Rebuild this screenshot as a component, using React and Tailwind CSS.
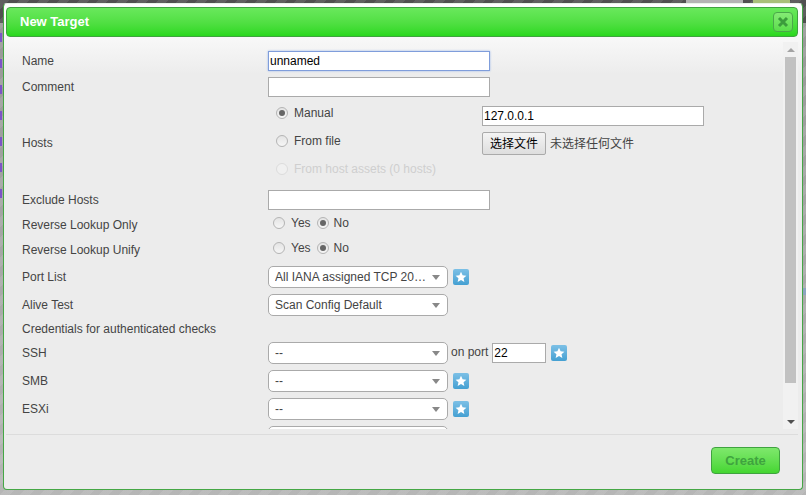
import React from "react";

function Star() {
  return (
    <span className="flex h-[16px] w-[16px] shrink-0 items-center justify-center rounded-[2px] bg-gradient-to-b from-[#7cc0e6] to-[#44a0d2]">
      <svg width="12" height="12" viewBox="0 0 24 24" fill="#fff">
        <path d="M12 1.5l3.2 7 7.6.8-5.7 5.1 1.6 7.5L12 18.1l-6.7 3.8 1.6-7.5L1.2 9.3l7.6-.8z" />
      </svg>
    </span>
  );
}

function Select({ value }) {
  return (
    <div className="flex h-[22px] w-[180px] shrink-0 items-center justify-between rounded-[5px] border border-[#aaaaaa] bg-white pl-[6px] pr-[7px] text-[12px] text-[#444]">
      <span className="truncate">{value}</span>
      <span className="ml-[6px] h-0 w-0 shrink-0 border-x-[4px] border-t-[5px] border-x-transparent border-t-[#888]" />
    </div>
  );
}

function Radio({ checked, disabled }) {
  return (
    <span className={`flex h-[12px] w-[12px] shrink-0 items-center justify-center rounded-full border ${disabled ? "border-[#dcdcdc] bg-[#f0f0f0]" : "border-[#b4b4b4] bg-gradient-to-b from-[#e4e4e4] to-[#f6f6f6]"}`}>
      {checked && <span className="h-[6px] w-[6px] rounded-full bg-[#666]" />}
    </span>
  );
}

function Input({ value = "", className = "w-[222px]", focus }) {
  return (
    <div className={`flex h-[20px] shrink-0 items-center border bg-white px-[1px] text-[12px] leading-none text-black ${focus ? "border-[#7f9ddb] shadow-[0_0_2px_#9db7ea]" : "border-[#aaaaaa]"} ${className}`}>
      {value}
    </div>
  );
}

function Row({ label, className = "", children }) {
  return (
    <div className={`flex items-center ${className}`}>
      <div className="w-[246px] shrink-0 whitespace-nowrap text-[12px] text-[#444]">{label}</div>
      {children}
    </div>
  );
}

function YesNo() {
  return (
    <div className="mb-[4px] flex items-center pl-[5px] text-[12px] text-[#444]">
      <Radio />
      <span className="ml-[6px]">Yes</span>
      <span className="ml-[6px]"><Radio checked /></span>
      <span className="ml-[5px]">No</span>
    </div>
  );
}

function PurpleBit({ className }) {
  return <span className={`absolute left-0 h-[9px] w-[2px] bg-[#7d55c7] ${className}`} />;
}

export default function App() {
  return (
    <div className="relative h-[495px] w-[806px] overflow-hidden bg-[repeating-linear-gradient(135deg,rgba(255,255,255,0.09)_0_7px,transparent_7px_14px),linear-gradient(#505050_0,#505050_23px,#989898_23px,#b6b6b6_100%)] pl-[3px] pt-[3px] font-['Liberation_Sans',Arial,sans-serif]">
      <PurpleBit className="top-[33px]" />
      <PurpleBit className="top-[59px]" />
      <PurpleBit className="top-[85px]" />
      <PurpleBit className="top-[111px]" />
      <PurpleBit className="top-[137px]" />
      <PurpleBit className="top-[163px]" />
      <PurpleBit className="top-[189px]" />
      <span className="absolute left-[686px] top-0 h-[3px] w-[57px] bg-[#b4b4b4]" />
      <span className="absolute left-[753px] top-0 h-[3px] w-[37px] bg-[#a9c07a]" />
      <span className="absolute right-0 top-[288px] h-[7px] w-[3px] bg-[#8ea4c0]" />

      <div className="relative flex h-[487px] w-[800px] flex-col rounded-[4px] border border-[#45a745] border-t-[#e8f4e8] bg-[linear-gradient(#ffffff_0,#f8f8f8_34px,#ececec_70px)] pb-[3px] pl-[2px] pr-[4px] pt-[3px]">
        <div className="flex h-[30px] shrink-0 items-center justify-between rounded-[4px] border border-[#3fa33f] bg-gradient-to-b from-[#69e85c] via-[#52e044] to-[#28d81c] pl-[13px] pr-[4px]">
          <span className="text-[13px] font-bold text-white">New Target</span>
          <span className="flex h-[20px] w-[20px] items-center justify-center rounded-[4px] border border-[#4aa84a] bg-gradient-to-b from-[#84ea74] to-[#5ade4a]">
            <svg width="12" height="12" viewBox="0 0 12 12" stroke="#3c9c3c" strokeWidth="3">
              <path d="M2 2l8 8M10 2l-8 8" />
            </svg>
          </span>
        </div>

        <div className="flex min-h-0 flex-1 overflow-hidden pb-[5px] pt-[5px]">
          <div className="min-h-0 flex-1 overflow-hidden pl-[16px] pt-[9px]">
            <Row label="Name" className="h-[19px]">
              <Input value="unnamed" focus />
            </Row>
            <Row label="Comment" className="mt-[7px] h-[20px]">
              <Input />
            </Row>

            <div className="mt-[2px] flex h-[86px] items-center">
              <div className="w-[246px] shrink-0 pt-[2px] text-[12px] text-[#444]">Hosts</div>
              <div className="flex w-[214px] shrink-0 flex-col self-start text-[12px] text-[#444]">
                <div className="flex h-[28px] items-center pl-[8px]"><Radio checked /><span className="ml-[6px]">Manual</span></div>
                <div className="flex h-[28px] items-center pl-[8px]"><Radio /><span className="ml-[6px]">From file</span></div>
                <div className="flex h-[28px] items-center pl-[8px] text-[#cfcfcf]"><Radio disabled /><span className="ml-[6px]">From host assets (0 hosts)</span></div>
              </div>
              <div className="flex flex-col self-start pt-[7px]">
                <Input value="127.0.0.1" />
                <div className="mt-[6px] flex items-center font-['Liberation_Sans','Noto_Sans_CJK_SC',sans-serif] text-[12px] text-[#444]">
                  <span className="flex h-[23px] w-[64px] items-center justify-center rounded-[2px] border border-[#aaa] bg-gradient-to-b from-[#f4f4f4] to-[#dedede] text-black">选择文件</span>
                  <span className="ml-[4px]">未选择任何文件</span>
                </div>
              </div>
            </div>

            <Row label="Exclude Hosts" className="mt-[5px] h-[20px]"><Input /></Row>
            <Row label="Reverse Lookup Only" className="mt-[5px] h-[20px]"><YesNo /></Row>
            <Row label="Reverse Lookup Unify" className="mt-[5px] h-[20px]"><YesNo /></Row>
            <Row label="Port List" className="mt-[6px] h-[22px]">
              <Select value="All IANA assigned TCP 2012-02-10" />
              <span className="ml-[5px]"><Star /></span>
            </Row>
            <Row label="Alive Test" className="mt-[6px] h-[22px]"><Select value="Scan Config Default" /></Row>
            <Row label="Credentials for authenticated checks" className="mt-[6px] h-[14px]" />
            <Row label="SSH" className="mt-[6px] h-[22px]">
              <Select value="--" />
              <span className="mb-[2px] ml-[3px] text-[12px] text-[#444]">on port</span>
              <span className="ml-[4px]"><Input value="22" className="w-[54px]" /></span>
              <span className="ml-[5px]"><Star /></span>
            </Row>
            <Row label="SMB" className="mt-[6px] h-[22px]">
              <Select value="--" />
              <span className="ml-[5px]"><Star /></span>
            </Row>
            <Row label="ESXi" className="mt-[6px] h-[22px]">
              <Select value="--" />
              <span className="ml-[5px]"><Star /></span>
            </Row>
            <Row label="" className="mt-[6px] h-[22px]"><Select value="" /></Row>
          </div>

          <div className="flex w-[15px] shrink-0 flex-col items-center bg-[#f1f1f1]">
            <div className="flex h-[15px] w-full items-center justify-center">
              <span className="h-0 w-0 border-x-[4px] border-b-[4px] border-x-transparent border-b-[#a3a3a3]" />
            </div>
            <div className="h-[326px] w-[11px] bg-[#c1c1c1]" />
            <div className="flex-1" />
            <div className="flex h-[15px] w-full items-center justify-center">
              <span className="h-0 w-0 border-x-[4px] border-t-[4px] border-x-transparent border-t-[#505050]" />
            </div>
          </div>
        </div>

        <div className="flex h-[52px] shrink-0 items-center justify-end border-t border-[#dcdcdc] pr-[18px]">
          <span className="flex h-[27px] w-[69px] items-center justify-center rounded-[4px] border border-[#3fa33f] bg-gradient-to-b from-[#7ee86c] to-[#44d630] text-[13px] font-bold text-[#3fa33f]">Create</span>
        </div>
      </div>
    </div>
  );
}
